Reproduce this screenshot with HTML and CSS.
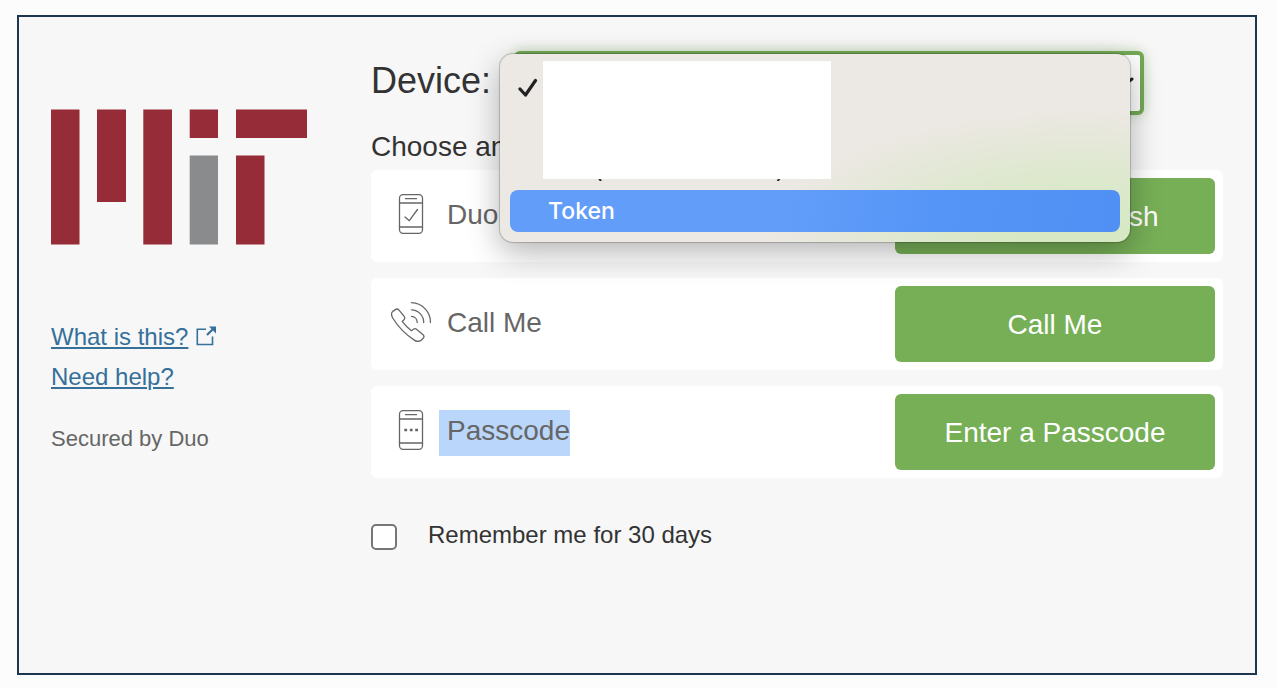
FILE: index.html
```html
<!DOCTYPE html>
<html lang="en">
<head>
<meta charset="utf-8">
<meta name="viewport" content="width=device-width, initial-scale=1">
<title>Two-factor authentication</title>
<link rel="stylesheet" href="styles.css">
</head>
<body>
<div class="frame">
  <aside class="sidebar">
    <svg class="logo" viewBox="0 0 256 136" role="img" aria-label="MIT">
      <g fill="#962c37">
        <path d="M0 .5h28.500v135H0zM46 .5h29v92.500H46zM92.300 .5h28.700v135H92.300zM138.700 .5H167V29h-28.300zM185 .5h71V29h-71zM185 46.500h28.500v89H185z"/>
      </g>
      <path fill="#8a8b8d" d="M138.700 46.500H167v89h-28.300z"/>
    </svg>
    <nav class="links">
      <a class="link" href="#about"><span class="link-text">What is this?</span>
        <svg class="external" viewBox="0 0 20 20" aria-hidden="true" fill="none" stroke="currentColor">
          <path stroke-width="1.600" d="M10 3.200H1.300v15.300H16.500V10.500"/><path stroke-width="2.200" d="M11 9 17 3"/><path d="M13 .5h7v7z" fill="currentColor" stroke="none"/>
        </svg>
      </a>
      <a class="link" href="#help"><span class="link-text">Need help?</span></a>
    </nav>
    <p class="secured">Secured by Duo</p>
  </aside>
  <main class="main">
    <div class="device-row">
      <label class="device-label" for="device">Device:</label>
      <div class="device-field">
        <select class="device-select" id="device" aria-label="Device"><option></option><option>Token</option></select>
        <svg class="chevron" viewBox="0 0 20 10" aria-hidden="true" fill="none" stroke="#222" stroke-width="3" stroke-linecap="round"><path d="m2 2 8 6 8-6"/></svg>
        <ul class="menu" role="listbox" aria-label="Device">
          <li class="menu-item" role="option" aria-selected="true"><svg class="tick" viewBox="0 0 20 20" aria-hidden="true" fill="none" stroke="#222" stroke-width="3.200" stroke-linecap="round" stroke-linejoin="round"><path d="m2 11 5.500 6L17.500 2.500"/></svg></li>
          <li class="menu-item" role="option" aria-selected="false"></li>
          <li class="menu-item menu-item-phone" role="option" aria-selected="false"><span>(</span><span>)</span></li>
          <li class="menu-item menu-item-active" role="option" aria-selected="false">Token</li>
          <li class="mask" role="presentation"></li>
        </ul>
      </div>
    </div>
    <h1 class="heading">Choose an authentication method</h1>
    <div class="methods">
      <section class="method">
        <div class="method-info">
          <svg class="icon" viewBox="0 0 40 40" aria-hidden="true"><rect x="8.500" y=".7" width="23" height="38.600" rx="3.500"/><path d="M8.500 9h23M8.500 33h23M14.500 4.700h11M14 23l4.300 3.700L26.500 15.500"/></svg>
          <span class="method-name">Duo Push</span>
        </div>
        <button class="action" type="button">Send Me a Push</button>
      </section>
      <section class="method">
        <div class="method-info">
          <svg class="icon" viewBox="0 0 40 40" aria-hidden="true"><path d="M1.800 9.400 4.300 7.600c1.300-.9 2.700-.6 3.700.6l5 6c1 1.300.9 2.700-.2 3.700l-1.600 1.500c2.600 3.500 5.800 6.700 9.200 9.300l2-1.400c1.100-.8 2.300-.8 3.400.1l6 5c1.300 1.100 1.500 2.500.5 3.800-2.500 3.400-5.600 4.100-9 1.900C15.500 33 7.500 25.500 1.700 16c-1.300-2.300-1.600-5 .1-6.600ZM20.500.7c10.500.3 19 8.800 19 19.800M20.500 7.800c6.800.2 12.200 5.700 12.200 12.700M20.500 14.300c3.200.2 5.700 2.700 5.700 6.200"/></svg>
          <span class="method-name">Call Me</span>
        </div>
        <button class="action" type="button">Call Me</button>
      </section>
      <section class="method">
        <div class="method-info">
          <svg class="icon" viewBox="0 0 40 40" aria-hidden="true"><rect x="8.500" y=".7" width="23" height="38.600" rx="3.500"/><path d="M8.500 9h23M8.500 33h23M14.500 4.700h11"/><path class="dots" d="M13.300 20h2.800M18.800 20h2.800M24.200 20H27"/></svg>
          <span class="method-name method-name-selected">Passcode</span>
        </div>
        <button class="action" type="button">Enter a Passcode</button>
      </section>
    </div>
    <div class="remember">
      <input class="checkbox" type="checkbox" id="remember">
      <label class="remember-label" for="remember">Remember me for 30 days</label>
    </div>
  </main>
</div>
</body>
</html>
```
FILE: styles.css
```css
* { box-sizing: border-box; }

body {
  margin: 0;
  min-height: 100vh;
  padding: 15px 21px 13px 17px;
  display: flex;
  background: #fcfcfc;
  color: #333;
  font-family: "Liberation Sans", Arial, sans-serif;
}

.frame {
  flex: 1;
  display: grid;
  grid-template-columns: 256px minmax(0, 1fr);
  column-gap: 64px;
  padding: 0 32px;
  border: 2px solid #1c3650;
  background: #f7f7f7;
}

.sidebar { padding-top: 92px; }
.logo { display: block; width: 100%; }

.links {
  display: flex;
  flex-direction: column;
  align-items: flex-start;
  margin-top: 72px;
}

.link {
  display: flex;
  gap: 8px;
  color: #35709b;
  font-size: 24px;
  line-height: 40px;
  text-decoration: none;
}

.link-text {
  text-decoration: underline;
  text-decoration-thickness: 2px;
  text-underline-offset: 2px;
}

.external { width: 20px; height: 20px; margin-top: 9px; }

.secured {
  margin: 28px 0 0;
  color: #666;
  font-size: 22px;
  line-height: 28px;
}

.main { padding-top: 34px; }

.device-row {
  display: flex;
  align-items: center;
  gap: 23px;
  padding-right: 79px;
}

.device-label { font-size: 36px; line-height: 60px; padding-bottom: 4px; }

.device-field { position: relative; flex: 1; }

.device-select {
  display: block;
  width: 100%;
  height: 64px;
  border: 4px solid #74a956;
  border-radius: 6px;
  background: #fff;
  box-shadow: 0 0 12px #74ae5666;
  appearance: none;
}

.chevron {
  position: absolute;
  top: 26px;
  right: 10px;
  width: 20px;
  height: 10px;
}

.menu {
  position: absolute;
  z-index: 1;
  top: 3px;
  left: -14px;
  right: 14px;
  margin: 0;
  padding: 10px;
  list-style: none;
  border-radius: 13px;
  background:
    radial-gradient(ellipse 310px 130px at 92% 100%, #d7e9c4 20%, #dee8cf 55%, #ece8e300),
    #ece8e3;
  box-shadow: 0 0 1px 1px #00000033, 0 10px 32px #0000004d;
  color: #222;
  font-family: Inter, sans-serif;
  font-size: 24px;
}

.menu-item {
  display: flex;
  align-items: center;
  height: 42px;
  padding: 0 38px;
}

.menu-item:first-child { padding-left: 8px; }
.menu-item-phone { gap: 173px; padding-left: 84px; }

.menu-item-active {
  border-radius: 8px;
  background: linear-gradient(100deg, #629df9 45%, #5595f7 70%, #5090f4);
  color: #fff;
  font-size: 23px;
  font-weight: 500;
}

.tick { width: 20px; height: 20px; margin-top: 5px; }

.mask {
  position: absolute;
  top: 7px;
  left: 43px;
  width: 288px;
  height: 118px;
  background: #fff;
}

.heading {
  margin: 16px 0 7px;
  font-size: 28px;
  font-weight: 400;
  line-height: 32px;
}

.methods { display: grid; gap: 16px; }

.method {
  display: flex;
  justify-content: space-between;
  padding: 8px;
  border-radius: 6px;
  background: #fff;
}

.method-info {
  display: flex;
  align-items: flex-start;
  gap: 8px;
  padding: 16px 0 0 12px;
}

.icon {
  width: 40px;
  height: 40px;
  fill: none;
  stroke: #666;
  stroke-width: 1.3;
  stroke-linecap: round;
  stroke-linejoin: round;
}

.dots { stroke-width: 2.6; stroke-linecap: butt; }

.method-name {
  padding: 0 0 4px 8px;
  color: #666;
  font-size: 28px;
  line-height: 42px;
}

.method-name-selected { background: #bad6fb; }

.action {
  width: 320px;
  height: 76px;
  padding: 2px 0 0;
  border: 0;
  border-radius: 6px;
  background: #77af57;
  color: #fff;
  font: 28px "Liberation Sans", Arial, sans-serif;
}

.remember {
  display: flex;
  gap: 31px;
  margin-top: 43px;
}

.checkbox {
  width: 26px;
  height: 26px;
  margin: 3px 0 0;
  border: 2px solid #767676;
  border-radius: 5px;
  background: #fff;
  appearance: none;
}

.remember-label { font-size: 24px; line-height: 28px; }
```
